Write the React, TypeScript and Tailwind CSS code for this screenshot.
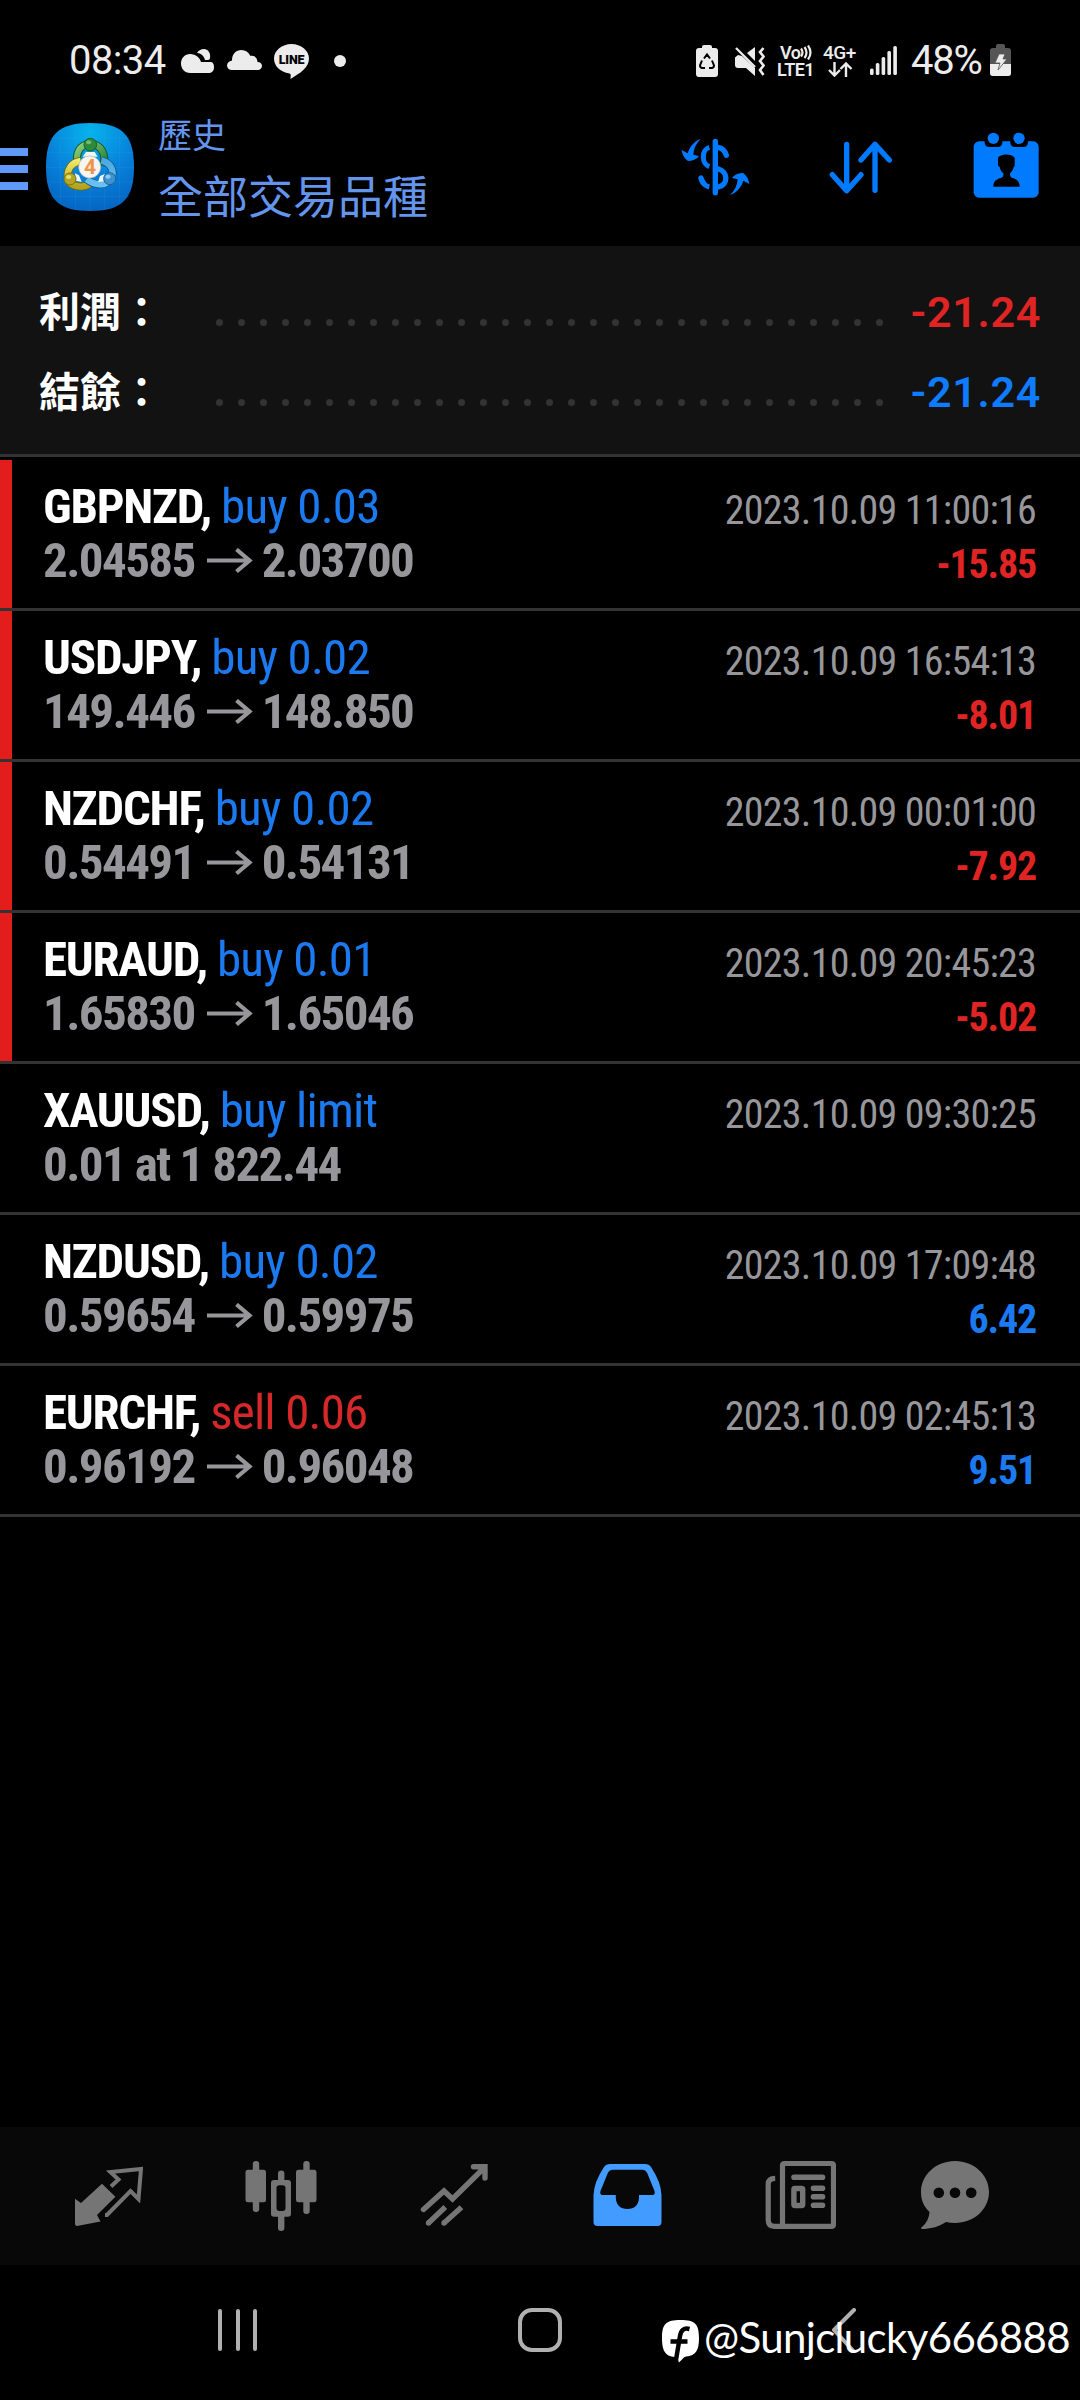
import React from "react";

interface Deal {
  symbol: string;
  action: string;
  side: "buy" | "sell";
  from?: string;
  to?: string;
  note?: string;
  time: string;
  profit?: string;
}

const deals: Deal[] = [
  { symbol: "GBPNZD", action: "buy 0.03", side: "buy", from: "2.04585", to: "2.03700", time: "2023.10.09 11:00:16", profit: "-15.85" },
  { symbol: "USDJPY", action: "buy 0.02", side: "buy", from: "149.446", to: "148.850", time: "2023.10.09 16:54:13", profit: "-8.01" },
  { symbol: "NZDCHF", action: "buy 0.02", side: "buy", from: "0.54491", to: "0.54131", time: "2023.10.09 00:01:00", profit: "-7.92" },
  { symbol: "EURAUD", action: "buy 0.01", side: "buy", from: "1.65830", to: "1.65046", time: "2023.10.09 20:45:23", profit: "-5.02" },
  { symbol: "XAUUSD", action: "buy limit", side: "buy", note: "0.01 at 1 822.44", time: "2023.10.09 09:30:25" },
  { symbol: "NZDUSD", action: "buy 0.02", side: "buy", from: "0.59654", to: "0.59975", time: "2023.10.09 17:09:48", profit: "6.42" },
  { symbol: "EURCHF", action: "sell 0.06", side: "sell", from: "0.96192", to: "0.96048", time: "2023.10.09 02:45:13", profit: "9.51" },
];

function StatusBar() {
  return (
    <div className="h-[110px] flex items-start justify-between text-[#ececec] pl-[69px] pr-[69px]">
      <div className="flex items-start pt-[37px]">
        <span className="w-[112px] text-[40px] leading-[48px] tracking-[-0.6px] whitespace-nowrap">08:34</span>
        <svg className="mt-[12px]" width="33" height="24" viewBox="0 0 33 24" fill="currentColor">
          <path d="M16 4C18 1 20 0 23 0c4 0 7 4 6 9 0 1-1 2-2 2h-3C23 7 20 4 16 4z" />
          <path d="M9 24C4 24 0 20 0 14.500 0 9 4 5 9 5c6 0 10 4 11 8h9c3 0 4 2 4 5 0 4-2 6-6 6z" />
        </svg>
        <svg className="ml-[13px] mt-[13px]" width="35" height="20" viewBox="0 0 35 20" fill="currentColor">
          <path d="M5 20c-3 0-5-2-5-4.500C0 13 2 11 5 10.500 5 4 9 0 14.500 0c4 0 7 2 9 6 4-1 7 2 7 6 3 0 4.500 2 4.500 4s-2 4-4 4z" />
        </svg>
        <div className="relative ml-[12px] mt-[7px] h-[35px] w-[35px]">
          <svg width="35" height="35" viewBox="0 0 35 35" fill="currentColor">
            <path d="M17.500 0C27 0 35 6.500 35 14.500 35 24 26 29 16.500 35c0-2 1-5-1-5.500C6 28 0 22 0 14.500 0 6.500 8 0 17.500 0z" />
          </svg>
          <span className="absolute left-0 top-[9px] w-full text-center text-[12.5px] leading-[14px] tracking-[-0.2px] font-black text-black">LINE</span>
        </div>
        <span className="ml-[25px] mt-[18px] h-[12px] w-[12px] rounded-full bg-[#ececec]" />
      </div>
      <div className="flex items-start pt-[37px]">
        <svg className="mt-[8px]" width="22" height="32" viewBox="0 0 22 32">
          <path d="M6 3V2Q6 0 8 0h6q2 0 2 2v1h3q3 0 3 3v23q0 3-3 3H3q-3 0-3-3V6q0-3 3-3z" fill="currentColor" />
          <path d="M8 13.500 11 9.500l3 4M6 15.500 4 20.500q0 2 2 2.500h3M16 15.500l2 5q0 2-2 2.500h-3" fill="none" stroke="#000" strokeWidth="2" />
        </svg>
        <svg className="ml-[17px] mt-[10px]" width="30" height="29" viewBox="0 0 30 29" fill="currentColor">
          <path d="M0 10.500 3 8l4 1 13 12v8l-9-8H3q-3 0-3-3zM12 6l8-6v14z" />
          <path d="M1 1 20 20" stroke="currentColor" strokeWidth="2.300" />
          <path d="M28.500 1 25 5l3.500 4.500L25 14l3.500 4.500L25 23l3.500 5" fill="none" stroke="currentColor" strokeWidth="2.600" />
        </svg>
        <div className="ml-[12px] mt-[7px] w-[38px] text-[18px] leading-[17px] font-semibold whitespace-nowrap">
          <div className="flex pl-[3px] tracking-[-0.5px]">
            Vo
            <svg className="mt-[1px]" width="12" height="15" viewBox="0 0 12 15" fill="none" stroke="currentColor" strokeWidth="2.200">
              <path d="M1 3.500q3 4 0 8M4.500 2q4 5.500 0 11M8 .500q5 7 0 14" />
            </svg>
          </div>
          <div className="tracking-[-0.5px]">LTE1</div>
        </div>
        <div className="ml-[8px] mt-[7px] w-[34px] text-[19px] leading-[17px] font-medium whitespace-nowrap">
          <div className="tracking-[-0.5px]">4G+</div>
          <svg className="ml-[5px] mt-[1px]" width="25" height="15" viewBox="0 0 25 15" fill="none" stroke="currentColor" strokeWidth="2.400">
            <path d="M6.500 0v13M1 8l5.500 5.500L12 8M18 15V2M12.500 7 18 1.500 23.500 7" />
          </svg>
        </div>
        <svg className="ml-[13px] mt-[9px]" width="27" height="29" viewBox="0 0 27 29" fill="currentColor">
          <rect x="0" y="22.500" width="3.600" height="6.500" rx="1.500" />
          <rect x="5.800" y="17" width="3.600" height="12" rx="1.500" />
          <rect x="11.600" y="11" width="3.600" height="18" rx="1.500" />
          <rect x="17.400" y="5" width="3.600" height="24" rx="1.500" />
          <rect x="23.300" y="0" width="3.600" height="29" rx="1.500" />
        </svg>
        <span className="ml-[14px] w-[79px] text-[40px] leading-[48px] tracking-[-1.200px] whitespace-nowrap">48%</span>
        <svg className="mt-[7px]" width="21" height="32" viewBox="0 0 21 32">
          <path d="M6 4V2Q6 0 8 0h5q2 0 2 2v2h3q3 0 3 3v22q0 3-3 3H3q-3 0-3-3V7q0-3 3-3z" fill="#555" />
          <path d="M0 20h21v9q0 3-3 3H3q-3 0-3-3z" fill="currentColor" />
          <path d="M9 10h6l-2 5h4L8 26l2-7H5z" fill="#ececec" stroke="#555" strokeWidth="0.800" />
        </svg>
      </div>
    </div>
  );
}

function AppLogo() {
  return (
    <div className="relative h-[88px] w-[88px]">
      <svg width="88" height="88" viewBox="48 39 264 264">
        <defs>
          <radialGradient id="sky" cx="0.5" cy="0.1" r="0.95">
            <stop offset="0" stopColor="#06b4ec" />
            <stop offset="0.500" stopColor="#0784dc" />
            <stop offset="1" stopColor="#0562c0" />
          </radialGradient>
          <linearGradient id="green" x1="0" y1="0" x2="1" y2="1">
            <stop offset="0" stopColor="#8fd17c" />
            <stop offset="1" stopColor="#1d7a32" />
          </linearGradient>
          <linearGradient id="yellow" x1="0" y1="0" x2="0" y2="1">
            <stop offset="0" stopColor="#efe868" />
            <stop offset="1" stopColor="#b5a51c" />
          </linearGradient>
          <linearGradient id="blue" x1="0" y1="0" x2="0" y2="1">
            <stop offset="0" stopColor="#4aa9e0" />
            <stop offset="1" stopColor="#6cc0f0" />
          </linearGradient>
        </defs>
        <path d="M180 39c96 0 132 36 132 132s-36 132-132 132S48 267 48 171 84 39 180 39z" fill="url(#sky)" />
        <path d="M92 60v222M136 42v258M180 40v262M224 42v258M268 60v222M62 84h236M50 128h260M49 172h262M50 216h260M62 260h236" stroke="#4fb4f0" strokeOpacity="0.250" strokeWidth="1.500" />
        <path d="M145 168c-12-36 4-66 36-66s50 32 38 66" fill="none" stroke="#155c2c" strokeWidth="24" />
        <path d="M145 168c-12-36 4-66 36-66s50 32 38 66" fill="none" stroke="url(#green)" strokeWidth="18" />
        <path d="M178 223c-20 12-58 8-64-16-5-25 9-50 38-54" fill="none" stroke="#75690c" strokeWidth="24" />
        <path d="M178 223c-20 12-58 8-64-16-5-25 9-50 38-54" fill="none" stroke="url(#yellow)" strokeWidth="19" />
        <path d="M214 151c30 8 40 32 30 54-13 22-46 25-74 3" fill="none" stroke="#135b96" strokeWidth="24" />
        <path d="M214 151c30 8 40 32 30 54-13 22-46 25-74 3" fill="none" stroke="url(#blue)" strokeWidth="19" />
        <path d="M168 126h26l9 14h-45zM135 190l12 6 8 20-18-4zM224 192l-14 6-6 18 20-2z" fill="#eef6ee" />
        <circle cx="181" cy="104" r="19" fill="#2c8a3a" stroke="#17612a" strokeWidth="3" />
        <ellipse cx="176" cy="97" rx="8" ry="6" fill="#8fd07e" opacity="0.700" />
        <circle cx="120" cy="207" r="18" fill="#b3a526" stroke="#7e7210" strokeWidth="3" />
        <ellipse cx="116" cy="201" rx="8" ry="6" fill="#f0eb8d" opacity="0.800" />
        <circle cx="239" cy="206" r="18" fill="#3c93d0" stroke="#1c629a" strokeWidth="3" />
        <ellipse cx="234" cy="200" rx="8" ry="6" fill="#a6dbf8" opacity="0.800" />
        <circle cx="179" cy="171" r="33" fill="#f7f5f1" stroke="#b9b6a4" strokeWidth="2" />
      </svg>
      <span className="absolute left-[33px] top-[33px] w-[22px] text-center text-[21px] leading-[23px] font-bold text-[#f0944a]">4</span>
    </div>
  );
}

function Header() {
  return (
    <div className="h-[136px] flex items-start text-[#6495ed]">
      <div className="mt-[38px] w-[28px] flex flex-col gap-[9px]">
        <span className="h-[8px] bg-[#6099f7]" />
        <span className="h-[8px] bg-[#6099f7]" />
        <span className="h-[8px] bg-[#6099f7]" />
      </div>
      <div className="ml-[18px] mt-[13px]">
        <AppLogo />
      </div>
      <div className="ml-[24px] w-[520px] whitespace-nowrap font-['Noto_Sans_CJK_TC',sans-serif]">
        <div className="text-[34px] leading-[48px]">歷史</div>
        <div className="mt-[5px] text-[45px] leading-[64px]">全部交易品種</div>
      </div>
      <svg className="ml-[3px] mt-[28px]" width="69" height="58" viewBox="122 354 207 174" fill="none" stroke="#007aff" strokeLinecap="round">
        <path d="M225 364v154" strokeWidth="16" />
        <path d="M207 382c-24 6-24 50 0 58M182 476c4 14 12 22 25 25" strokeWidth="15" strokeLinecap="butt" />
        <path d="M182 474c2 6 4 11 8 16" strokeWidth="16" />
        <path d="M234 382c14 3 20 10 24 24M234 447c30 8 30 48 0 54" strokeWidth="16" />
        <path d="M181 357c-16 5-32 20-39 43l-18-10c1 12 8 26 19 33 13 0 26-5 33-15l-17-4c1-18 8-34 22-47z" fill="#007aff" stroke="none" />
        <path d="M269 525c16-5 34-21 40-43l18 10c-1-12-8-26-19-33-13 0-26 5-33 15l17 4c-1 18-9 34-23 47z" fill="#007aff" stroke="none" />
      </svg>
      <svg className="ml-[79px] mt-[31px]" width="64" height="53" viewBox="567 362 192 159" fill="none" stroke="#007aff" strokeWidth="16" strokeLinecap="round" strokeLinejoin="round">
        <path d="M620 372v138M577 463l43 48 43-48M705 510V372M663 419l42-47 43 47" />
      </svg>
      <svg className="ml-[80px] mt-[22px]" width="67" height="67" viewBox="997 337 201 201">
        <rect x="999" y="365" width="195" height="169" rx="16" fill="#007aff" />
        <path d="M1032 360h53v10q-2 12-14 12h-25q-12 0-14-12zM1109 360h53v10q-2 12-14 12h-25q-12 0-14-12z" fill="#000" />
        <circle cx="1058" cy="356" r="17" fill="#007aff" />
        <circle cx="1135" cy="356" r="17" fill="#007aff" />
        <path d="M1058 501c0-16 8-22 22-26 7-2 9-7 8-14-6-5-9-11-11-19-4-2-6-5-5-11v-17c3-6 11-7 16-9 12-1 24-1 34 9v20c1 5-1 6-3 8-2 8-5 14-11 19 0 7 1 12 7 14 14 4 22 10 22 26z" fill="#000" />
      </svg>
    </div>
  );
}

function SummaryRow({ label, value, color }: { label: string; value: string; color: string }) {
  return (
    <div className="h-[80px] flex items-start pl-[39px] pr-[39px] whitespace-nowrap">
      <span className="w-[177px] text-[41px] leading-[60px] font-semibold text-white font-['Noto_Sans_CJK_TC',sans-serif]">{label}</span>
      <div className="mt-[40px] w-[667px] flex justify-between">
        {Array.from({ length: 31 }, (_, i) => (
          <span key={i} className="h-[7px] w-[7px] rounded-full bg-[#333]" />
        ))}
      </div>
      <span className={`ml-auto pt-[3px] text-[43px] leading-[60px] font-semibold tracking-[0.7px] ${color}`}>{value}</span>
    </div>
  );
}

function DealRow({ deal }: { deal: Deal }) {
  const loss = deal.profit?.startsWith("-");
  return (
    <div className="h-[151px] flex border-b-[3px] border-[#333] whitespace-nowrap [font-stretch:75%]">
      <div className={`w-[12px] ${loss ? "bg-[#e31c1c]" : ""}`} />
      <div className="pl-[31px] pt-[20px] text-[49px] leading-[54px]">
        <div className="tracking-[-1.25px]">
          <span className="font-bold text-white">{deal.symbol},</span>{" "}
          <span className={`tracking-[-0.8px] ${deal.side === "buy" ? "text-[#1c7af0]" : "text-[#d62828]"}`}>{deal.action}</span>
        </div>
        <div className="flex items-center font-bold tracking-[-1.6px] text-[#97979b]">
          {deal.note ?? (
            <>
              {deal.from}
              <svg className="ml-[12px] mr-[9px]" width="46" height="26" viewBox="0 0 46 26" fill="none" stroke="currentColor" strokeWidth="4.200">
                <path d="M0 12.500h43M29.500 1.500l13 11-13 11" />
              </svg>
              {deal.to}
            </>
          )}
        </div>
      </div>
      <div className="ml-auto pr-[44px] pt-[24px] text-right text-[40px] leading-[54px]">
        <div className="tracking-[-0.75px] text-[#97979b]">{deal.time}</div>
        <div className={`font-bold tracking-[-1.2px] ${loss ? "text-[#e02424]" : "text-[#1c7af0]"}`}>{deal.profit}</div>
      </div>
    </div>
  );
}

function TabBar() {
  return (
    <div className="h-[138px] bg-[#080808] flex items-start pl-[73px] pt-[30px] text-[#757575]">
      <svg width="70" height="80" viewBox="73 57 70 80">
        <path d="M75 98.700l6 4.300L102 83.700l13.400 13L97 115l3.500 6.500L77 126q-2 0-2-2z" fill="currentColor" />
        <path d="M111 86.500l7.500-7-8-7.500 30.500-3-2.500 30-8-8L107 115h-2" fill="none" stroke="currentColor" strokeWidth="4" />
      </svg>
      <svg className="ml-[102px]" width="72" height="80" viewBox="245 57 72 80" fill="currentColor">
        <rect x="245.500" y="69.700" width="20.500" height="32.600" rx="2.500" />
        <rect x="252.800" y="61" width="6.400" height="51" rx="3" />
        <rect x="296" y="69.700" width="20.500" height="32.600" rx="2.500" />
        <rect x="303.300" y="61" width="6.400" height="53" rx="3" />
        <path d="M278 80V73.500q0-3 3.200-3t3.200 3V80H288q3 0 3 3v31q0 2.700-3 2.700h-3.600V128q0 3-3.200 3t-3.200-3v-11.300H274q-3 0-3-2.700V83q0-3 3-3zM276.500 88v20q0 3 3 3h3q3 0 3-3V88q0-2.700-3-2.700h-3q-3 0-3 2.700z" fillRule="evenodd" />
      </svg>
      <svg className="ml-[103px]" width="70" height="80" viewBox="420 57 70 80" fill="none" stroke="currentColor" strokeWidth="5.400" strokeLinecap="round">
        <path d="M423.500 109.500 444 91l8.500 8L484.500 67.500M473.500 66.700H485V78" />
        <path d="M428.500 123 445.300 107M444 123 461.500 107.300" strokeLinecap="butt" />
        <path d="M428.500 123h.010M444 123h.010" />
      </svg>
      <svg className="ml-[102px]" width="70" height="80" viewBox="592 57 70 80">
        <path d="M610 64h35q4 0 6 3 10 15 10.500 28v27q0 4-4 4H597.500q-4 0-4-4V95Q594 82 604 67q2-3 6-3zM613 69.700q-4 0-5.500 4L600.500 91q-1 4 2 4h13.300v3q1 11 11.600 11T639 98v-3h13.500q3 0 2-4L647.500 73.700q-1.500-4-5.500-4z" fill="#429cff" fillRule="evenodd" />
      </svg>
      <svg className="ml-[102px]" width="72" height="80" viewBox="764 57 72 80" fill="none" stroke="currentColor" strokeWidth="5.200">
        <path d="M783.500 126.300h48q2 0 2-2V65.500q0-2-2-2h-47q-2 0-2 2v60.800h-8q-6.300 0-6.300-6.300V84q0-5.500 7-5.700" />
        <path d="M794 77.200h28.500M813.500 88.200h9M813.500 96.700h9M813.500 105.200h9" strokeWidth="5.600" strokeLinecap="round" />
        <rect x="793.900" y="88.500" width="8.800" height="17" rx="1" strokeWidth="5.400" />
      </svg>
      <svg className="ml-[84px]" width="70" height="80" viewBox="920 57 70 80">
        <path d="M955 61c19 0 34 14 34 31s-15 31-34 31q-5 0-9-1c-8 5-16 7-24 7q-2-1 0-2 7-6 7.500-15c-6-6-8.500-12-8.500-20 0-17 15-31 34-31z" fill="currentColor" />
        <circle cx="938.800" cy="92.700" r="5.300" fill="#080808" />
        <circle cx="955" cy="92.700" r="5.300" fill="#080808" />
        <circle cx="971.200" cy="92.700" r="5.300" fill="#080808" />
      </svg>
    </div>
  );
}

function SystemNav() {
  return (
    <div className="relative h-[135px] flex items-start pl-[218px] pt-[43px]">
      <div className="mt-px flex gap-[13.500px]">
        <span className="h-[42px] w-[4px] rounded-full bg-[#b0b0b0]" />
        <span className="h-[42px] w-[4px] rounded-full bg-[#b0b0b0]" />
        <span className="h-[42px] w-[4px] rounded-full bg-[#b0b0b0]" />
      </div>
      <span className="ml-[261px] h-[44px] w-[44px] rounded-[14px] border-4 border-[#b0b0b0]" />
      <svg className="ml-[268px]" width="28" height="46" viewBox="830 308 28 46" fill="none" stroke="#b0b0b0" strokeWidth="4" strokeLinecap="round" strokeLinejoin="round">
        <path d="M854 310 834 330l19 20.500" />
      </svg>
      <div className="absolute left-[662px] top-[46px] flex items-start text-white">
        <svg className="mt-[9px]" width="38" height="43" viewBox="0 0 38 43">
          <path d="M18.500 0C33 0 37 4 37 18c0 12-3 18-13 18.500-2.500.500-4 3.500-7 6L15 37C4 37 0 32 0 18 0 4 4 0 18.500 0z" fill="#fff" />
          <path d="M27.500 9c-5.500-1.500-8.500 1-9.500 7L13.800 41M8.500 21.500h17" fill="none" stroke="#000" strokeWidth="4.500" />
        </svg>
        <span className="ml-[4px] text-[42px] leading-[52px] tracking-[-0.65px] whitespace-nowrap font-['Lato',sans-serif]">@Sunjclucky666888</span>
      </div>
    </div>
  );
}

export default function App() {
  return (
    <div className="h-[2400px] w-[1080px] flex flex-col overflow-hidden bg-black font-['Roboto',sans-serif]">
      <StatusBar />
      <Header />
      <div className="h-[211px] pt-[33px] bg-[#121212] border-b-[3px] border-[#333]">
        <SummaryRow label="利潤：" value="-21.24" color="text-[#e02424]" />
        <SummaryRow label="結餘：" value="-21.24" color="text-[#0f7bff]" />
      </div>
      <div className="flex-1 pt-[3px]">
        {deals.map((deal) => (
          <DealRow key={deal.symbol} deal={deal} />
        ))}
      </div>
      <TabBar />
      <SystemNav />
    </div>
  );
}
